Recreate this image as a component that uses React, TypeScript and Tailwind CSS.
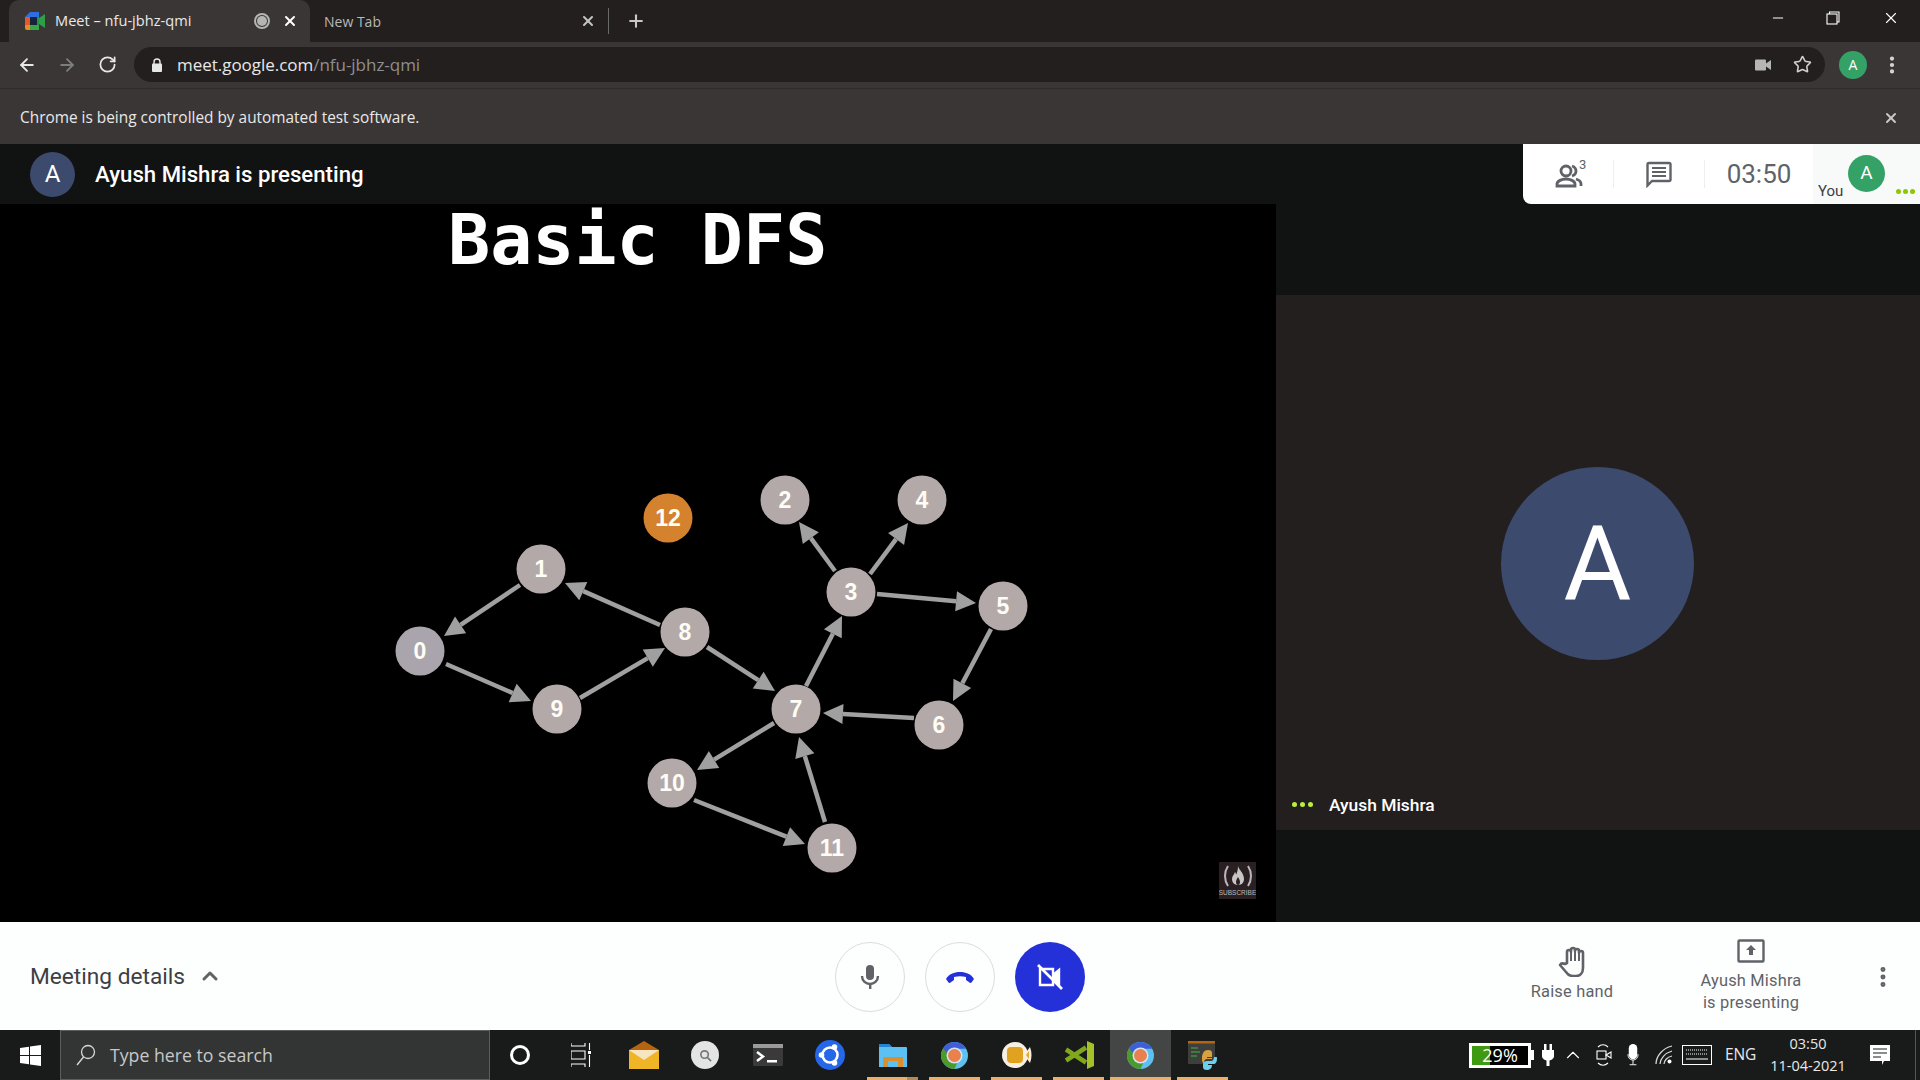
import type { ReactNode } from "react";
import { ArrowLeft, ArrowRight, RotateCw, Star, X, Plus, Minus, ChevronUp, MoreVertical } from "lucide-react";

const nodes = [
  { n: "0", x: 420, y: 651, fill: "#aaa5ad" },
  { n: "1", x: 541, y: 569, fill: "#b3a9a9" },
  { n: "2", x: 785, y: 500, fill: "#b3a9a9" },
  { n: "3", x: 851, y: 592, fill: "#b3a9a9" },
  { n: "4", x: 922, y: 500, fill: "#b3a9a9" },
  { n: "5", x: 1003, y: 606, fill: "#b3a9a9" },
  { n: "6", x: 939, y: 725, fill: "#b3a9a9" },
  { n: "7", x: 796, y: 709, fill: "#b3a9a9" },
  { n: "8", x: 685, y: 632, fill: "#b3a9a9" },
  { n: "9", x: 557, y: 709, fill: "#b3a9a9" },
  { n: "10", x: 672, y: 783, fill: "#b3a9a9" },
  { n: "11", x: 832, y: 848, fill: "#b3a9a9" },
  { n: "12", x: 668, y: 518, fill: "#d5822f" },
];

const edges = [
  [520, 585, 444, 636],
  [660, 625, 565, 583],
  [446, 664, 531, 701],
  [580, 698, 665, 648],
  [707, 647, 775, 691],
  [806, 686, 842, 616],
  [835, 571, 799, 522],
  [870, 574, 908, 523],
  [877, 594, 976, 603],
  [991, 629, 953, 701],
  [914, 718, 823, 713],
  [774, 723, 697, 770],
  [694, 800, 805, 844],
  [825, 822, 799, 737],
];

function Arrow({ e }: { e: number[] }) {
  const [x1, y1, x2, y2] = e;
  const a = Math.atan2(y2 - y1, x2 - x1);
  const len = 20;
  const w = 10;
  const bx = x2 - len * Math.cos(a);
  const by = y2 - len * Math.sin(a);
  const px = -Math.sin(a) * w;
  const py = Math.cos(a) * w;
  return (
    <g fill="#a0a0a0" stroke="#a0a0a0">
      <line x1={x1} y1={y1} x2={bx} y2={by} strokeWidth={4.5} />
      <polygon points={`${x2},${y2} ${bx + px},${by + py} ${bx - px},${by - py}`} strokeWidth={0} />
    </g>
  );
}

function Slide() {
  return (
    <div className="relative h-[718px] w-[1276px] shrink-0 bg-black">
      <svg width="1276" height="718" viewBox="0 204 1276 718" className="block">
        {edges.map((e, i) => (
          <Arrow key={i} e={e} />
        ))}
        {nodes.map((d) => (
          <g key={d.n}>
            <circle cx={d.x} cy={d.y} r={24.5} fill={d.fill} />
            <text
              x={d.x}
              y={d.y + 8}
              textAnchor="middle"
              fill="#fffdf5"
              fontSize="23"
              fontWeight="700"
              fontFamily="'Liberation Sans', sans-serif"
            >
              {d.n}
            </text>
          </g>
        ))}
      </svg>
      <div className="absolute left-[448px] top-[1px] whitespace-pre font-['DejaVu_Sans_Mono',monospace] text-[70px] font-bold leading-none text-white">
        Basic DFS
      </div>
      <div className="absolute left-[1219px] top-[658px] flex h-[37px] w-[37px] flex-col items-center overflow-hidden bg-[#2a1f22]">
        <svg width="34" height="27" viewBox="0 0 34 27" className="shrink-0">
          <path d="M7 4C3 10 3 18 7 24M27 4c4 6 4 14 0 20" fill="none" stroke="#bdb8b8" strokeWidth="2" />
          <path d="M17 4c1 4 6 7 6 13 0 3-2 6-6 6s-6-3-6-6c0-3 2-4 3-7 1 1 1 2 1 3 1-2 2-5 2-9z" fill="#c9c5c5" />
          <path d="M17 15c1 2 2 3 2 5s-1 3-2 3-2-1-2-3 1-3 2-5z" fill="#2a1f22" />
        </svg>
        <span className="font-['Liberation_Sans',sans-serif] text-[6.5px] leading-[8px] text-[#bdb8b8]">SUBSCRIBE</span>
      </div>
    </div>
  );
}

function MeetLogo() {
  return (
    <svg width="20" height="18" viewBox="0 0 20 18">
      <path d="M5 0h9v5H0z" fill="#2d6fe0" />
      <path d="M0 5h5v8H0z" fill="#e2582a" />
      <path d="M0 13h5v5H2a2 2 0 01-2-2z" fill="#ea8b1c" />
      <path d="M5 13h9v5H5z" fill="#3aa648" />
      <path d="M5 5h7v8H5z" fill="#17243a" />
      <path d="M12 5h2v8h-2z" fill="#2a8f4a" />
      <path d="M14 6l6-4v14l-6-4z" fill="#2f9e48" />
    </svg>
  );
}

function TabBar() {
  return (
    <div className="flex h-[42px] items-center bg-[#231f1f] font-['Open_Sans',sans-serif] text-[14px]">
      <div className="ml-[9px] flex h-[42px] w-[301px] items-center rounded-t-[10px] bg-[#3a3636] pl-[16px] pr-[12px] text-[#e8e8e8]">
        <MeetLogo />
        <span className="ml-[10px] flex-1 text-[14.6px]">Meet – nfu-jbhz-qmi</span>
        <span className="flex h-[16px] w-[16px] items-center justify-center rounded-full border-2 border-[#b5b5b5]">
          <span className="h-[10px] w-[10px] rounded-full bg-[#b5b5b5]" />
        </span>
        <X className="ml-[12px] h-[16px] w-[16px] text-white" strokeWidth={3} />
      </div>
      <div className="flex w-[298px] items-center pl-[14px] pr-[12px] text-[#b8b8b8]">
        <span className="flex-1">New Tab</span>
        <X className="h-[16px] w-[16px] text-[#c4c4c4]" strokeWidth={3} />
      </div>
      <div className="h-[26px] w-px bg-[#6a6a6a]" />
      <Plus className="ml-[17px] h-[20px] w-[20px] text-[#c8c8c8]" strokeWidth={2.5} />
      <div className="flex-1" />
      <div className="mb-[6px] flex items-center text-white">
        <Minus className="h-[16px] w-[16px]" strokeWidth={1.6} />
        <svg className="ml-[40px]" width="14" height="14" viewBox="0 0 14 14" fill="none" stroke="#fff" strokeWidth="1.1">
          <rect x="1" y="3" width="10" height="10" />
          <path d="M3.5 3V1H13v10h-2" />
        </svg>
        <X className="ml-[42px] mr-[20px] h-[18px] w-[18px]" strokeWidth={1.5} />
      </div>
    </div>
  );
}

function Toolbar() {
  return (
    <div className="flex h-[47px] items-center border-b border-[#2e2b2b] bg-[#3a3636] pb-[1px]">
      <ArrowLeft className="ml-[17px] h-[20px] w-[20px] text-[#e8e8e8]" strokeWidth={2.2} />
      <ArrowRight className="ml-[20px] h-[20px] w-[20px] text-[#7d7d7d]" strokeWidth={2.2} />
      <RotateCw className="ml-[21px] h-[19px] w-[19px] text-[#e8e8e8]" strokeWidth={2.2} />
      <div className="ml-[17px] flex h-[35px] flex-1 items-center rounded-full bg-[#231f1f] pl-[17px] pr-[13px]">
        <svg width="12" height="14" viewBox="0 0 12 14" fill="#e8e8e8">
          <rect x="1" y="5.5" width="10" height="8.5" rx="1" />
          <path d="M3 6V4a3 3 0 016 0v2" fill="none" stroke="#e8e8e8" strokeWidth="1.4" />
        </svg>
        <div className="ml-[14px] flex-1 font-['Open_Sans',sans-serif] text-[17px] tracking-[-0.03px]">
          <span className="text-[#e8e8e8]">meet.google.com</span>
          <span className="text-[#8f8f8f]">/nfu-jbhz-qmi</span>
        </div>
        <svg width="16" height="12" viewBox="0 0 16 12" fill="#b5b5b5">
          <rect x="0" y="0.5" width="11" height="11" rx="1" />
          <path d="M11 4.5l5-3.5v10l-5-3.5z" />
        </svg>
        <Star className="ml-[22px] h-[19px] w-[19px] text-[#d0d0d0]" strokeWidth={2} />
      </div>
      <div className="ml-[14px] flex h-[28px] w-[28px] items-center justify-center rounded-full bg-[#34a267] font-['Open_Sans',sans-serif] text-[14px] text-white">A</div>
      <MoreVertical className="ml-[14px] mr-[17px] h-[22px] w-[22px] text-[#d8d8d8]" strokeWidth={2.6} />
    </div>
  );
}

function Infobar() {
  return (
    <div className="flex h-[55px] items-center bg-[#3a3636] pl-[20px] pr-[21px] pt-[2px] font-['Open_Sans',sans-serif] text-[15.4px] text-[#e8e8e8]">
      <span className="flex-1">Chrome is being controlled by automated test software.</span>
      <X className="h-[16px] w-[16px] text-[#c8c8c8]" strokeWidth={3} />
    </div>
  );
}

function MeetHeader() {
  return (
    <div className="flex h-[60px] items-center bg-[#111212] pl-[30px] font-['Roboto',sans-serif]">
      <div className="flex h-[45px] w-[45px] items-center justify-center rounded-full bg-[#3c4a6e] text-[24px] text-white">A</div>
      <span className="ml-[20px] flex-1 pt-[1px] text-[22.2px] font-medium text-white">Ayush Mishra is presenting</span>
      <div className="flex h-[60px] w-[397px] items-stretch rounded-bl-[8px] bg-white shadow-sm">
        <div className="flex w-[90px] items-center justify-center pl-[8px]">
          <svg width="34" height="38" viewBox="0 -4 34 38" fill="none" stroke="#5f6368" strokeWidth="2.8">
            <circle cx="11" cy="12" r="5" />
            <path d="M2 27v-2c0-3 5-5 9-5s9 2 9 5v2z" />
            <path d="M17 7c3 1 4 3 4 5s-1 4-4 5" />
            <path d="M21 20c3 1 5 2 5 5v2" />
            <text x="24" y="10" fontSize="13" fill="#5f6368" stroke="none" fontFamily="Roboto, sans-serif">3</text>
          </svg>
        </div>
        <div className="my-[16px] w-px bg-[#eeeeee]" />
        <div className="flex w-[90px] items-center justify-center">
          <svg width="28" height="28" viewBox="0 0 28 28" fill="none" stroke="#5f6368" strokeWidth="2.4">
            <path d="M2.5 4.5a1.5 1.5 0 011.5-1.5h20a1.5 1.5 0 011.5 1.5v15a1.5 1.5 0 01-1.5 1.5H7l-4.500 4.500z" />
            <path d="M7 8h14M7 12h14M7 16h14" strokeWidth="2" />
          </svg>
        </div>
        <div className="my-[16px] w-px bg-[#eeeeee]" />
        <div className="flex w-[108px] items-center justify-center text-[26px] text-[#5f6368]">03:50</div>
        <div className="relative flex-1 bg-[#f8f9f9]">
          <span className="absolute left-[5px] top-[38px] text-[15px] leading-[18px] text-[#3c4043]">You</span>
          <div className="absolute left-[35px] top-[11px] flex h-[37px] w-[37px] items-center justify-center rounded-full bg-[#34a267] text-[19px] text-white">A</div>
          <div className="absolute left-[83px] top-[45px] flex gap-[2px]">
            <span className="h-[5px] w-[5px] rounded-full bg-[#8cc700]" />
            <span className="h-[5px] w-[5px] rounded-full bg-[#8cc700]" />
            <span className="h-[5px] w-[5px] rounded-full bg-[#8cc700]" />
          </div>
        </div>
      </div>
    </div>
  );
}

function RightPanel() {
  return (
    <div className="flex flex-1 flex-col bg-[#111212]">
      <div className="h-[91px]" />
      <div className="relative flex h-[535px] items-center justify-center bg-[#231f1f] font-['Roboto',sans-serif] text-white">
        <div className="mb-[-2px] mr-[1px] flex h-[193px] w-[193px] items-center justify-center rounded-full bg-[#3c4a6e] text-[104px]">A</div>
        <div className="absolute bottom-[12px] left-[16px] flex items-center">
          <div className="flex gap-[3px]">
            <span className="h-[5px] w-[5px] rounded-full bg-[#b9ef3f]" />
            <span className="h-[5px] w-[5px] rounded-full bg-[#b9ef3f]" />
            <span className="h-[5px] w-[5px] rounded-full bg-[#b9ef3f]" />
          </div>
          <span className="ml-[16px] text-[17.4px] font-medium">Ayush Mishra</span>
        </div>
      </div>
    </div>
  );
}

function BottomBar() {
  return (
    <div className="relative flex h-[108px] items-center bg-[#fdfefe] font-['Roboto',sans-serif]">
      <span className="ml-[30px] pt-[3px] text-[22.7px] text-[#3c4043]">Meeting details</span>
      <ChevronUp className="ml-[13px] h-[24px] w-[24px] text-[#5f6368]" strokeWidth={3} />
      <div className="absolute left-[835px] top-[20px] flex gap-[20px]">
        <div className="flex h-[70px] w-[70px] items-center justify-center rounded-full border border-[#dadce0]">
          <svg width="20" height="26" viewBox="0 0 20 26" fill="#5f6368">
            <rect x="6" y="1" width="8" height="15" rx="4" />
            <path d="M2 12c0 5 4 8 8 8s8-3 8-8" fill="none" stroke="#5f6368" strokeWidth="2.4" />
            <rect x="9" y="19" width="2.400" height="6" />
          </svg>
        </div>
        <div className="flex h-[70px] w-[70px] items-center justify-center rounded-full border border-[#dadce0]">
          <svg width="30" height="14" viewBox="0 0 30 14" fill="#2430d8">
            <path d="M1 9c3-5 8-7 14-7s11 2 14 7l-2.500 3.500c-.5.5-1.500.5-2 0L21 10V7c-4-1-8-1-12 0v3l-3.500 2.500c-.5.5-1.500.5-2 0z" />
          </svg>
        </div>
        <div className="flex h-[70px] w-[70px] items-center justify-center rounded-full bg-[#2430d8]">
          <svg width="30" height="30" viewBox="0 0 30 30" fill="none" stroke="#fff" strokeWidth="2.4">
            <path d="M5 7h13v16H5z" />
            <path d="M18 13l6-5v14l-6-5" fill="#fff" />
            <path d="M3 3l24 24" strokeWidth="2.6" />
          </svg>
        </div>
      </div>
      <div className="absolute left-[1512px] top-[23px] flex w-[120px] flex-col items-center text-[16.4px] tracking-[0.2px] text-[#5f6368]">
        <svg width="30" height="32" viewBox="0 0 30 32" fill="none" stroke="#5f6368" strokeWidth="2.6" strokeLinejoin="round">
          <path d="M10 18V7a2 2 0 014 0V5a2 2 0 014 0v1a2 2 0 014 0v2a2 2 0 014 0v15c0 5-3 8-7 8h-3c-3 0-5-1-7-4l-6-7c1-2 3-2 5-1z" />
          <path d="M14 6v10M18 6v10M22 8v8" strokeWidth="2" />
        </svg>
        <span className="mt-[4px] leading-[22px]">Raise hand</span>
      </div>
      <div className="absolute left-[1681px] top-[17px] flex w-[140px] flex-col items-center text-[16.4px] leading-[22px] tracking-[0.2px] text-[#5f6368]">
        <svg width="28" height="24" viewBox="0 0 28 24" fill="none" stroke="#5f6368" strokeWidth="2.4">
          <rect x="1.500" y="1.500" width="25" height="21" rx="1" />
          <path d="M14 6l5 5h-3v5h-4v-5H9z" fill="#5f6368" stroke="none" />
        </svg>
        <span className="mt-[7px]">Ayush Mishra</span>
        <span>is presenting</span>
      </div>
      <MoreVertical className="absolute left-[1870px] top-[42px] h-[26px] w-[26px] text-[#5f6368]" strokeWidth={2.6} />
    </div>
  );
}

function ChromeIcon() {
  return (
    <svg width="27" height="27" viewBox="0 0 27 27">
      <circle cx="13.5" cy="13.500" r="13.500" fill="#5cc1ee" />
      <path d="M13.500 0A13.500 13.500 0 0125.200 6.750H13.500L3.500 13.500 2 6.750A13.500 13.500 0 0113.500 0z" fill="#3f5ed8" />
      <path d="M2 6.500A13.500 13.500 0 0013.500 27l4-9-8-3z" fill="#4c9a2c" />
      <circle cx="13.500" cy="13.500" r="8" fill="#d5e4ef" />
      <circle cx="13.500" cy="13.500" r="6.500" fill="#e9804e" />
    </svg>
  );
}

function Slot({ split, children }: { split?: boolean; children: ReactNode }) {
  return (
    <div className="relative flex h-[50px] w-[51px] items-center justify-center">
      {children}
      <div className="absolute bottom-0 left-0 right-0 h-[3px] bg-[#e8b06a]" />
      {split ? <div className="absolute bottom-0 right-0 h-[3px] w-[11px] bg-[#b08a58]" /> : null}
    </div>
  );
}

function Taskbar() {
  return (
    <div className="flex h-[50px] items-center bg-[#191b1b] font-['Open_Sans',sans-serif] text-white">
      <div className="flex w-[60px] justify-center">
        <svg width="21" height="21" viewBox="0 0 21 21" fill="#fff">
          <path d="M0 3l9-1.300V10H0zM10 1.500L21 0v10H10zM0 11h9v8.300L0 18zM10 11h11v10l-11-1.500z" />
        </svg>
      </div>
      <div className="flex h-[50px] w-[430px] items-center border border-[#5c5e5e] bg-[#333535] pl-[15px] text-[#c8c8c8]">
        <svg width="20" height="22" viewBox="0 0 20 22" fill="none" stroke="#d8d8d8" strokeWidth="1.300">
          <circle cx="12" cy="8" r="6.500" />
          <path d="M7.500 13L1 21" />
        </svg>
        <span className="ml-[14px] text-[17.7px]">Type here to search</span>
      </div>
      <div className="flex w-[60px] justify-center">
        <span className="h-[20px] w-[20px] rounded-full border-[3px] border-white" />
      </div>
      <div className="flex w-[62px] justify-center">
        <svg width="20" height="26" viewBox="0 0 20 26" fill="none" stroke="#fff" strokeWidth="1.100">
          <path d="M0 1v3h14V1M0 9h14v8H0zM0 25v-3h14v3M18.500 1v7M18.500 13v12" />
          <rect x="17" y="9" width="3" height="3" fill="#fff" stroke="none" />
        </svg>
      </div>
      <div className="flex w-[64px] justify-center">
        <svg width="30" height="28" viewBox="0 0 30 28">
          <path d="M15 0l15 9H0z" fill="#b7640f" />
          <rect x="0" y="9" width="30" height="19" fill="#efb527" />
          <path d="M0 9h30L15 19z" fill="#f5e5c0" />
        </svg>
      </div>
      <div className="flex w-[58px] justify-center">
        <div className="flex h-[28px] w-[28px] items-center justify-center rounded-full bg-[#e4e4e4]">
          <svg width="13" height="13" viewBox="0 0 14 14" fill="none" stroke="#777" strokeWidth="1.800">
            <circle cx="6" cy="6" r="4" />
            <path d="M9 9l4 4" />
          </svg>
        </div>
      </div>
      <div className="flex w-[68px] justify-center">
        <svg width="30" height="22" viewBox="0 0 30 22">
          <rect width="30" height="22" rx="1.500" fill="#3a3a3a" />
          <rect width="30" height="4" fill="#9a9a9a" />
          <path d="M4 8l6 4.500-6 4.500" fill="none" stroke="#fff" strokeWidth="2.500" />
          <rect x="14" y="16" width="10" height="2.500" fill="#fff" />
        </svg>
      </div>
      <div className="flex w-[56px] justify-center">
        <svg width="30" height="30" viewBox="0 0 30 30">
          <circle cx="15" cy="15" r="15" fill="#2567e8" />
          <circle cx="15" cy="15" r="7.500" fill="none" stroke="#fff" strokeWidth="2.600" />
          <circle cx="19.500" cy="7" r="2.800" fill="#fff" />
          <circle cx="6.500" cy="15" r="2.800" fill="#fff" />
          <circle cx="19.500" cy="23" r="2.800" fill="#fff" />
        </svg>
      </div>
      <div className="w-[9px]" />
      <Slot split>
        <svg width="28" height="23" viewBox="0 0 28 23">
          <path d="M0 1a1 1 0 011-1h9l3 3h14a1 1 0 011 1v19H0z" fill="#5cc1f2" />
          <path d="M0 0h10l3 3H0z" fill="#2385d0" />
          <path d="M4 23v-10h20v10h-5v-6h-10v6z" fill="#d98f2c" />
        </svg>
      </Slot>
      <div className="w-[11px]" />
      <Slot><ChromeIcon /></Slot>
      <div className="w-[11px]" />
      <Slot>
        <svg width="30" height="26" viewBox="0 0 30 26">
          <circle cx="13" cy="13" r="13" fill="#f7efe2" />
          <rect x="5" y="5" width="16" height="16" rx="4" fill="#e1a21f" />
          <path d="M22 13l6-8c2 5 2 11 0 16z" fill="#f7efe2" />
          <path d="M24 13l3-4v8z" fill="#e9a72b" />
        </svg>
      </Slot>
      <div className="w-[11px]" />
      <Slot>
        <svg width="30" height="28" viewBox="0 0 30 28" fill="none">
          <path d="M23 0l7 3v22l-7 3V0z" fill="#a4c02a" />
          <path d="M2 8.500l20 13M2 19.500l20-13" stroke="#7fa81c" strokeWidth="4.500" />
        </svg>
      </Slot>
      <div className="w-[6px]" />
      <div className="relative flex h-[50px] w-[61px] items-center justify-center bg-[#444646]">
        <ChromeIcon />
        <div className="absolute bottom-0 left-0 right-0 h-[3px] bg-[#e8b06a]" />
      </div>
      <div className="w-[6px]" />
      <Slot>
        <svg width="29" height="29" viewBox="0 0 29 29">
          <rect x="0" y="0" width="27" height="23" fill="#3c3f3c" />
          <rect x="0" y="0" width="27" height="2.500" fill="#b7640f" />
          <path d="M3 7h7M3 11h9M3 15h6" stroke="#3f8f3f" strokeWidth="1.500" />
          <path d="M14 17c0-3 1-8 6-8 3 0 4 1 4 3v4h-5v1h5v1h-5c-2 0-3 1-3 4h-1c-1-1-1-3-1-5z" fill="#d8a23e" />
          <path d="M29 17c0 4-1 6-4 6h-5v1h4c0 4-3 5-5 5-3 0-4-1-4-3v-3c0-2 2-3 4-3h4c2 0 3-2 3-4h2c1 0 1 0 1 1z" fill="#6ad0ef" />
        </svg>
      </Slot>
      <div className="flex-1" />
      <div className="flex h-[25px] w-[62px] items-center border-[3px] border-white bg-black text-[18px] leading-none">
        <div className="relative h-full w-full bg-[linear-gradient(90deg,#3f9a12_0_32%,#000_32%_100%)] text-center">29%</div>
      </div>
      <div className="h-[10px] w-[3px] bg-white" />
      <svg className="ml-[8px]" width="12" height="22" viewBox="0 0 12 22" fill="#fff">
        <rect x="2" y="0" width="2.500" height="6" />
        <rect x="7.500" y="0" width="2.500" height="6" />
        <path d="M0 6h12v6c0 3-3 4-4.500 4.500V22h-3v-5.500C3 16 0 15 0 12z" />
      </svg>
      <ChevronUp className="ml-[8px] h-[22px] w-[22px]" strokeWidth={1.2} />
      <svg className="ml-[12px]" width="16" height="24" viewBox="0 0 16 24" fill="none" stroke="#fff" strokeWidth="1.100">
        <rect x="1" y="8" width="9" height="8" />
        <path d="M10 12l5-3v6zM2 4c3-3 7-3 10 0M2 20c3 3 7 3 10 0" />
      </svg>
      <svg className="ml-[14px]" width="14" height="22" viewBox="0 0 14 26" fill="#fff">
        <rect x="2" y="0" width="10" height="18" rx="5" />
        <path d="M1 12c0 4 2 7 6 7s6-3 6-7" fill="none" stroke="#fff" strokeWidth="1.100" />
        <path d="M7 19v5M3 24.500h8" stroke="#fff" strokeWidth="1.100" />
      </svg>
      <svg className="ml-[15px]" width="18" height="20" viewBox="0 0 18 20" fill="none" stroke="#dcdcdc" strokeWidth="1.200">
        <path d="M1 19C1 11 8 3 17 1M5 19c0-5 5-11 12-13M9 19c0-3 3-7 8-8" />
        <circle cx="14.500" cy="16.500" r="2" fill="#fff" stroke="none" />
      </svg>
      <svg className="ml-[9px]" width="30" height="20" viewBox="0 0 30 20" fill="none" stroke="#fff" strokeWidth="1">
        <rect x="0.500" y="0.500" width="29" height="19" />
        <path d="M4 5h22M4 9h22" strokeDasharray="1 1" />
        <path d="M4 14h22" />
      </svg>
      <span className="ml-[13px] text-[15.5px] tracking-[-0.2px] text-[#e8e8e8]">ENG</span>
      <div className="ml-[14px] flex w-[76px] flex-col items-center text-[14.5px] leading-[22px] text-[#e8e8e8]">
        <span>03:50</span>
        <span>11-04-2021</span>
      </div>
      <svg className="ml-[24px]" width="20" height="20" viewBox="0 0 20 20">
        <path d="M0 0h20v16h-6l-2 4v-4H0z" fill="#fff" />
        <path d="M3 4h14M3 8h14M3 12h8" stroke="#191b1b" strokeWidth="1.200" />
      </svg>
      <div className="ml-[25px] h-[50px] w-px bg-[#555]" />
      <div className="w-[4px]" />
    </div>
  );
}

export default function App() {
  return (
    <div className="h-[1080px] w-[1920px] overflow-hidden bg-black">
      <TabBar />
      <Toolbar />
      <Infobar />
      <MeetHeader />
      <div className="flex h-[718px]">
        <Slide />
        <RightPanel />
      </div>
      <BottomBar />
      <Taskbar />
    </div>
  );
}
